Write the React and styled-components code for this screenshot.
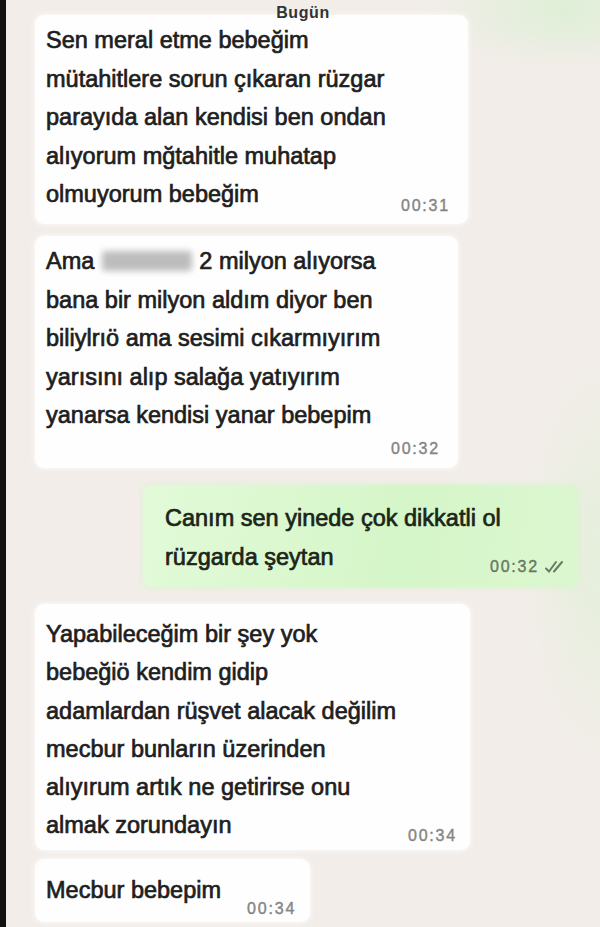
import React from "react";
import styled, { createGlobalStyle } from "styled-components";

const GlobalStyle = createGlobalStyle`
  html, body {
    margin: 0;
    padding: 0;
    background: #f2ede9;
  }
  #root {
    height: 927px;
    overflow: hidden;
  }
`

const Screen = styled.div`
  height: 927px;
  border-left: 6px solid #111;
  box-sizing: border-box;
  background:
    radial-gradient(ellipse 140px 60px at 560px 10px, rgba(214, 240, 206, 0.7), transparent),
    radial-gradient(ellipse 70px 200px at 590px 560px, rgba(220, 240, 210, 0.6), transparent),
    #f2ede9;
  font-family: "Liberation Sans", Arial, sans-serif;
  position: relative;
  display: flex;
  flex-direction: column;
  padding-left: 29px;
`

const DayLabel = styled.div`
  position: absolute;
  top: 4px;
  left: 0;
  right: 0;
  text-align: center;
  font-size: 16px;
  font-weight: 700;
  letter-spacing: 0.6px;
  color: #333;
  z-index: 2;
`

const Bubble = styled.div`
  box-sizing: border-box;
  width: ${p => p.w}px;
  margin-top: ${p => p.space}px;
  margin-left: ${p => p.shift || 0}px;
  padding: ${p => p.pad};
  border-radius: 9px;
  background: ${p => p.out
    ? "linear-gradient(100deg, #e2fad8 0%, #d5f6c8 60%, #dcf7d0 100%)"
    : "#fefefe"};
  box-shadow: 0 0 6px ${p => p.out ? "rgba(214,246,200,0.9)" : "rgba(255,255,255,0.9)"};
  color: ${p => p.out ? "#1b2519" : "#1e1e1e"};
  font-size: 23.5px;
  line-height: ${p => p.lh || 38.6}px;
  -webkit-text-stroke: 0.7px currentColor;
`

const Line = styled.div`
  white-space: nowrap;
`

const LastRow = styled.div`
  display: flex;
  justify-content: space-between;
  align-items: flex-end;
  white-space: nowrap;
`

const MetaRow = styled.div`
  display: flex;
  justify-content: flex-end;
  margin-top: 5px;
`

const Meta = styled.span`
  display: inline-flex;
  align-items: center;
  gap: 5px;
  font-size: 16px;
  line-height: 18px;
  letter-spacing: 1.8px;
  color: ${p => p.out ? "#677a63" : "#858585"};
  -webkit-text-stroke: 0.4px currentColor;
  margin-bottom: ${p => p.lift || 0}px;
  margin-left: ${p => p.gapLeft || 0}px;
`

const Redacted = styled.span`
  display: inline-block;
  width: 90px;
  height: 20px;
  margin: 0 7px 0 8px;
  vertical-align: -2px;
  background: #bdbdbd;
  border-radius: 3px;
  filter: blur(3px);
`

const Ticks = () => (
  <svg width="24" height="14" viewBox="0 0 24 14" fill="none" stroke="#677a63" strokeWidth="2" strokeLinecap="round">
    <path d="M2 8.5 L5 11.5 L12 2" />
    <path d="M10 11.5 L18 2" />
  </svg>
)

const Time = ({ time, out, read, lift, gapLeft }) => (
  <Meta out={out} lift={lift} gapLeft={gapLeft}>
    {time}
    {read && <Ticks />}
  </Meta>
)

const Message = ({ lines, time, out, read, w, space, pad, shift, lh, timeBelow, lift, gapLeft }) => {
  const head = timeBelow ? lines : lines.slice(0, -1)
  const last = lines[lines.length - 1]
  return (
    <Bubble out={out} w={w} space={space} pad={pad} shift={shift} lh={lh}>
      {head.map((l, i) => <Line key={i}>{l}</Line>)}
      {timeBelow ? (
        <MetaRow><Time time={time} out={out} read={read} /></MetaRow>
      ) : (
        <LastRow>
          <span>{last}</span>
          <Time time={time} out={out} read={read} lift={lift} gapLeft={gapLeft} />
        </LastRow>
      )}
    </Bubble>
  )
}

const App = () => (
  <>
    <GlobalStyle />
    <Screen>
      <DayLabel>Bugün</DayLabel>
      <Message
        w={433}
        space={15}
        pad="6px 18px 10px 11px"
        time="00:31"
        lift={-1}
        lines={[
          "Sen meral etme bebeğim",
          "mütahitlere sorun çıkaran rüzgar",
          "parayıda alan kendisi ben ondan",
          "alıyorum mğtahitle muhatap",
          "olmuyorum bebeğim",
        ]}
      />
      <Message
        w={423}
        space={12}
        pad="6px 18px 10px 11px"
        time="00:32"
        timeBelow
        lines={[
          <>Ama<Redacted />2 milyon alıyorsa</>,
          "bana bir milyon aldım diyor ben",
          "biliylrıö ama sesimi cıkarmıyırım",
          "yarısını alıp salağa yatıyırım",
          "yanarsa kendisi yanar bebepim",
        ]}
      />
      <Message
        out
        read
        w={435}
        space={17}
        shift={108}
        pad="14px 10px 11px 22px"
        time="00:32"
        lift={0}
        lines={[
          "Canım sen yinede çok dikkatli ol",
          "rüzgarda şeytan",
        ]}
      />
      <Message
        w={435}
        space={17}
        lh={38.2}
        pad="11px 13px 6px 11px"
        time="00:34"
        lift={-1}
        lines={[
          "Yapabileceğim bir şey yok",
          "bebeğiö kendim gidip",
          "adamlardan rüşvet alacak değilim",
          "mecbur bunların üzerinden",
          "alıyırum artık ne getirirse onu",
          "almak zorundayın",
        ]}
      />
      <Message
        w={275}
        space={9}
        pad="12px 14px 12px 11px"
        time="00:34"
        lift={-8}
        gapLeft={26}
        lines={["Mecbur bebepim"]}
      />
    </Screen>
  </>
)

export default App
